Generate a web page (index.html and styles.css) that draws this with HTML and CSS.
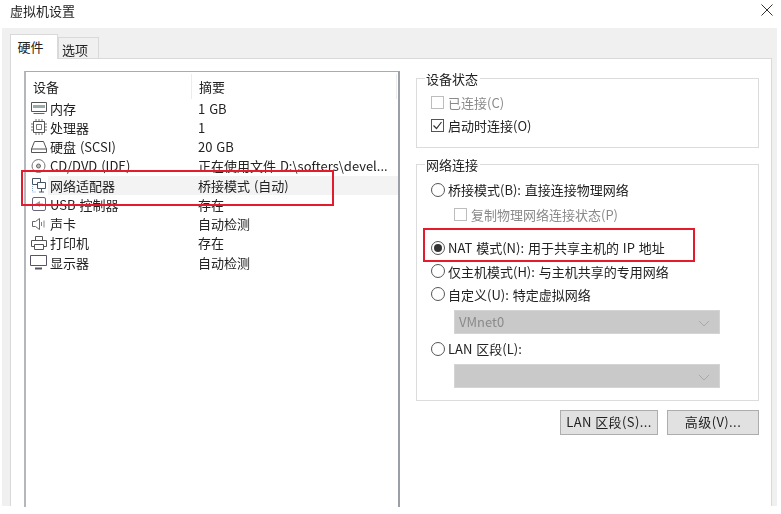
FILE: index.html
```html
<!DOCTYPE html>
<html lang="zh-CN">
<head>
<meta charset="utf-8">
<title>虚拟机设置</title>
<link rel="stylesheet" href="styles.css">
</head>
<body>
<div class="window">
  <header class="titlebar">
    <span class="title">虚拟机设置</span>
    <svg class="close" width="12" height="12" viewBox="0 0 12 12"><path d="M.5.5l11 11M11.500.5l-11 11" stroke="#333" stroke-width="1" fill="none"/></svg>
  </header>
  <div class="tabstrip">
    <div class="tab active">硬件</div>
    <div class="tab">选项</div>
  </div>
  <main class="page">
    <section class="list">
      <div class="row head"><span class="c1 headname">设备</span><span class="c2">摘要</span></div>
      <div class="row">
        <span class="c1"><svg class="ico" width="18" height="16" viewBox="0 0 18 16"><path d="M1.500 2.500h15v9h-15z" fill="#fff" stroke="#555"/><path d="M3 5h12v3H3z" fill="#9aa"/><path d="M3.500 13.500h11" stroke="#666"/></svg>内存</span><span class="c2">1 GB</span>
      </div>
      <div class="row">
        <span class="c1"><svg class="ico" width="18" height="16" viewBox="0 0 18 16"><path d="M3.500 2.500h11v11h-11z" fill="#fff" stroke="#555"/><path d="M6.500 5.500h5v5h-5z" fill="#fff" stroke="#777"/><path d="M6 0v2M9 0v2M12 0v2M6 14v2M9 14v2M12 14v2M1 5h2M1 8h2M1 11h2M15 5h2M15 8h2M15 11h2" stroke="#777"/></svg>处理器</span><span class="c2">1</span>
      </div>
      <div class="row">
        <span class="c1"><svg class="ico" width="18" height="16" viewBox="0 0 18 16"><path d="M1.500 10l3-7.500h9l3 7.500v3.500h-15zM1.500 10h15" fill="none" stroke="#555"/></svg>硬盘 (SCSI)</span><span class="c2">20 GB</span>
      </div>
      <div class="row">
        <span class="c1"><svg class="ico" width="18" height="16" viewBox="0 0 18 16"><circle cx="8.500" cy="8" r="6.500" fill="#fff" stroke="#777"/><circle cx="8.500" cy="8" r="2" fill="#bbb" stroke="#666"/></svg>CD/DVD (IDE)</span><span class="c2">正在使用文件 D:\softers\devel...</span>
      </div>
      <div class="row selected">
        <span class="c1"><svg class="ico" width="18" height="16" viewBox="0 0 18 16"><path d="M2.500 1.500h8v6h-8z" fill="#fff" stroke="#456"/><path d="M7.500 5.500h8v6h-8z" fill="#fff" stroke="#456"/><path d="M11.500 12v3M9 15h5" stroke="#456"/><path d="M2.500 9v6h4" stroke="#8ac" stroke-dasharray="1 1" fill="none"/></svg>网络适配器</span><span class="c2">桥接模式 (自动)</span>
      </div>
      <div class="row">
        <span class="c1"><svg class="ico" width="18" height="16" viewBox="0 0 18 16"><rect x="2.500" y="1.500" width="13" height="13" rx="1.500" fill="#fff" stroke="#667"/><path d="M5 8l5-3v6z" fill="#999"/><path d="M10 8h3" stroke="#999"/></svg>USB 控制器</span><span class="c2">存在</span>
      </div>
      <div class="row">
        <span class="c1"><svg class="ico" width="18" height="16" viewBox="0 0 18 16"><path d="M2.500 5.500h3l4-3v11l-4-3h-3z" fill="#fff" stroke="#666"/><path d="M11.500 6v4M14 4.500v7" stroke="#888" fill="none"/></svg>声卡</span><span class="c2">自动检测</span>
      </div>
      <div class="row">
        <span class="c1"><svg class="ico" width="18" height="16" viewBox="0 0 18 16"><path d="M5.500 5.500v-4h7v4M4.500 11.500h-3v-6h15v6h-3" fill="#fff" stroke="#555"/><path d="M4.500 9.500h9v5h-9z" fill="#fff" stroke="#555"/></svg>打印机</span><span class="c2">存在</span>
      </div>
      <div class="row">
        <span class="c1"><svg class="ico" width="18" height="16" viewBox="0 0 18 16"><path d="M.5 1.500h16v10H.5z" fill="#fff" stroke="#556"/><path d="M5 14.500h7" stroke="#556" stroke-width="2"/></svg>显示器</span><span class="c2">自动检测</span>
      </div>
    </section>
    <aside class="side">
      <fieldset class="group status">
        <legend>设备状态</legend>
        <label class="opt off"><span class="check"></span>已连接(C)</label>
        <label class="opt"><span class="check on"><svg width="11" height="11" viewBox="0 0 11 11"><path d="M1.500 5.500l3 3 5-6.500" fill="none" stroke="#333" stroke-width="1.200"/></svg></span>启动时连接(O)</label>
      </fieldset>
      <fieldset class="group net">
        <legend>网络连接</legend>
        <label class="opt"><span class="radio"></span>桥接模式(B): 直接连接物理网络</label>
        <label class="opt off sub"><span class="check"></span>复制物理网络连接状态(P)</label>
        <label class="opt nat"><span class="radio on"></span>NAT 模式(N): 用于共享主机的 IP 地址</label>
        <label class="opt"><span class="radio"></span>仅主机模式(H): 与主机共享的专用网络</label>
        <label class="opt"><span class="radio"></span>自定义(U): 特定虚拟网络</label>
        <div class="select">VMnet0<svg class="chev" width="12" height="7" viewBox="0 0 12 7"><path d="M1 1l5 5 5-5" fill="none" stroke="#a8a8a8"/></svg></div>
        <label class="opt"><span class="radio"></span>LAN 区段(L):</label>
        <div class="select"><svg class="chev" width="12" height="7" viewBox="0 0 12 7"><path d="M1 1l5 5 5-5" fill="none" stroke="#a8a8a8"/></svg></div>
      </fieldset>
      <div class="actions">
        <button class="btn lan">LAN 区段(S)...</button>
        <button class="btn adv">高级(V)...</button>
      </div>
    </aside>
  </main>
  <div class="mark mark-a"></div>
  <div class="mark mark-b"></div>
</div>
</body>
</html>
```
FILE: styles.css
```css
* { box-sizing: border-box; }
html, body { margin: 0; padding: 0; background: #fff; }
body { font-family: "Noto Sans CJK SC", "Noto Sans", sans-serif; font-size: 13px; color: #222; word-spacing: 1px; }
.window { position: relative; width: 781px; height: 514px; overflow: hidden; filter: blur(0.3px); }
.titlebar { height: 28px; display: flex; align-items: center; justify-content: space-between; padding: 0 8px 7px 10px; }
.title { font-size: 13px; line-height: 18px; }
.close { display: block; margin-top: -2px; }
.tabstrip { margin: 0 4px 0 2px; height: 30px; background: #f0f0f0; display: flex; align-items: flex-end; padding-left: 8px; }
.tab { height: 21px; width: 41px; background: #f0f0f0; border: 1px solid #d9d9d9; border-bottom: 0; text-align: center; line-height: 23px; font-size: 13px; padding-right: 7px; }
.tab.active { height: 25px; width: 48px; background: #fff; position: relative; top: 1px; z-index: 1; }
.page { height: 448px; background: #fff; border: 1px solid #d9d9d9; border-bottom: 0; box-shadow: -8px 0 0 #f0f0f0, 5px 0 0 #f0f0f0; margin: 0 9px 0 10px; display: flex; padding: 12px 0 0 13px; gap: 16px; }
.list { width: 376px; height: 436px; border: 2px solid #b4b8bc; border-bottom: 0; border-right-color: #9aa0a6; border-top: 1px solid #a8acb0; padding-top: 2px; flex: none; }
.row { display: flex; align-items: center; height: 19.250px; white-space: nowrap; line-height: 19px; }
.head { height: 24.500px; border-right: 1px solid #ececec; margin-right: 1px; }
.c1 { display: flex; align-items: center; width: 165px; padding-left: 3px; flex: none; height: 100%; }
.c2 { padding-left: 7px; height: 100%; display: flex; align-items: center; }
.head .c1 { padding-left: 7px; }
.head .c2 { border-left: 1px solid #ececec; }
.ico { display: block; flex: none; margin-right: 2px; margin-left: 1px; }
.selected { background: linear-gradient(#f3f3f3, #f3f3f3) no-repeat 22px 0 / 100% 100%; }
.side { width: 343px; flex: none; display: flex; flex-direction: column; }
.group { margin: 0; border: 1px solid #dcdcdc; padding: 0 0 0 11px; min-width: 0; }
.group legend { padding: 0 2px 0 1px; margin-left: -3px; line-height: 17px; font-size: 13px; }
.status { height: 78px; margin-top: -1px; padding-top: 4px; }
.net { height: 245px; margin-top: 8px; padding-top: 5px; }
.opt { display: flex; align-items: center; height: 23px; white-space: nowrap; }
.off { color: #8a8a8a; }
.sub { padding-left: 23px; height: 26px; }
.nat { height: 32.500px; padding-top: 9px; }
.check { width: 13px; height: 13px; border: 1px solid #bdbdbd; margin: 0 4px 0 3px; flex: none; display: flex; align-items: center; justify-content: center; }
.check.on { border-color: #555; }
.radio { width: 14px; height: 14px; border: 1px solid #555; border-radius: 50%; margin: 0 3px; flex: none; display: flex; align-items: center; justify-content: center; }
.radio.on::after { content: ""; width: 8px; height: 8px; border-radius: 50%; background: #333; }
.select { margin: 4px 0 3.500px 26px; width: 266px; height: 24px; background: #c9c9c9; border: 1px solid #d4d4d4; color: #8a8a8a; display: flex; align-items: center; padding: 0 9px 0 4px; position: relative; }
.chev { position: absolute; right: 9px; top: 9px; }
.actions { display: flex; justify-content: flex-end; gap: 9px; margin-top: 9px; }
.btn { font: inherit; font-size: 13px; letter-spacing: .4px; color: #222; height: 25px; background: #e1e1e1; border: 1px solid #adadad; padding: 0 0 2px; white-space: nowrap; }
.lan { width: 98px; }
.adv { width: 92px; }
.mark { position: absolute; border: 2px solid #e31b2c; pointer-events: none; }
.mark-a { left: 21px; top: 170px; width: 313px; height: 36px; }
.mark-b { left: 423px; top: 228px; width: 272px; height: 34px; }
```
